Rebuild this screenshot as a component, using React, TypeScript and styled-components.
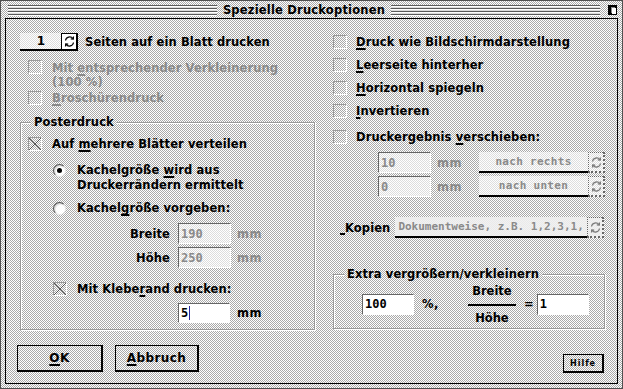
import React from "react";
import styled, { createGlobalStyle } from "styled-components";

const dither = "repeating-conic-gradient(#ffffff 0 25%, #a9a9a9 0 50%) 0 0 / 2px 2px fixed";
const lightDither = "repeating-conic-gradient(#ffffff 0 25%, #dcdcdc 0 50%) 0 0 / 2px 2px fixed";
const grey = "#8a8a8a";

const Global = createGlobalStyle`
    html, body {
        margin: 0;
        padding: 0;
        width: 623px;
        height: 389px;
        overflow: hidden;
    }
    body {
        font-family: "DejaVu Sans", "Liberation Sans", sans-serif;
        font-weight: bold;
        font-size: 11.5px;
        color: #000;
    }
`;

const Window = styled.div`
    width: 623px;
    height: 389px;
    box-sizing: border-box;
    border: 1px solid #505050;
    background: ${dither};
    display: flex;
    flex-direction: column;
`;

const TitleBar = styled.div`
    height: 17px;
    display: flex;
    align-items: center;
    padding: 0 5px 0 7px;
    gap: 4px;
`;

const Stripes = styled.div`
    flex: 1;
    height: 11px;
    margin-top: 1px;
    background: repeating-linear-gradient(
        to bottom,
        #5a5a5a 0 1px,
        #ffffff 1px 2px,
        #dcdcdc 2px 3px
    );
`;

const Title = styled.div`
    font-size: 11.5px;
    letter-spacing: 0.2px;
    padding: 0 2px;
`;

const CloseBox = styled.div`
    width: 9px;
    height: 10px;
    margin-left: 4px;
    background: #000;
    position: relative;
    &::after {
        content: "";
        position: absolute;
        right: 1px;
        bottom: 1px;
        width: 4px;
        height: 6px;
        background: #fff;
        box-shadow: -1px -1px 0 #888;
    }
`;

const Frame = styled.div`
    flex: 1;
    margin: 0 4px 4px 4px;
    border: 1px solid #000;
    padding: 14px 0 0 14px;
    display: flex;
    gap: 18px;
`;

const Column = styled.div<{ $w: number }>`
    width: ${p => p.$w}px;
    display: flex;
    flex-direction: column;
`;

const Row = styled.div<{ $h?: number; $mt?: number; $pl?: number; $top?: boolean }>`
    display: flex;
    align-items: ${p => (p.$top ? "flex-start" : "center")};
    height: ${p => (p.$h ? `${p.$h}px` : "auto")};
    margin-top: ${p => p.$mt ?? 0}px;
    padding-left: ${p => p.$pl ?? 0}px;
    flex-shrink: 0;
`;

const Label = styled.span<{ $off?: boolean; $ml?: number; $lh?: number; $pt?: number }>`
    color: ${p => (p.$off ? grey : "#000")};
    margin-left: ${p => p.$ml ?? 0}px;
    padding-top: ${p => p.$pt ?? 0}px;
    line-height: ${p => p.$lh ?? 14}px;
    white-space: nowrap;
    letter-spacing: 0.1px;
`;

const RightLabel = styled(Label)`
    width: 149px;
    text-align: right;
`;

const Mn = styled.span`
    text-decoration: underline;
    text-decoration-thickness: 2px;
    text-underline-offset: 2px;
`;

const MnGap = styled.span`
    display: inline-block;
    width: 5px;
    height: 12px;
    border-bottom: 2px solid #000;
    vertical-align: -3px;
`;

const CheckBox = styled.span<{ $on?: boolean }>`
    width: 14px;
    height: 14px;
    box-sizing: border-box;
    border-top: 1px solid #9a9a9a;
    border-left: 1px solid #9a9a9a;
    border-right: 1px solid #fff;
    border-bottom: 1px solid #fff;
    flex-shrink: 0;
    display: inline-flex;
    background: ${p =>
        p.$on
            ? `linear-gradient(45deg, transparent 46%, #555 46% 54%, transparent 54%),
               linear-gradient(-45deg, transparent 46%, #555 46% 54%, transparent 54%)`
            : "transparent"};
`;

const Radio = styled.span<{ $on?: boolean }>`
    width: 13px;
    height: 13px;
    box-sizing: border-box;
    border-radius: 50%;
    border: 1px solid #000;
    border-color: #555 #eee #eee #555;
    background: radial-gradient(circle at 60% 60%, #fff 0 45%, #cfcfcf 70%);
    flex-shrink: 0;
    display: inline-flex;
    align-items: center;
    justify-content: center;
    &::after {
        content: "";
        width: 5px;
        height: 5px;
        border-radius: 50%;
        background: ${p => (p.$on ? "#000" : "transparent")};
    }
`;

const Field = styled.div<{ $off?: boolean; $w?: number; $h?: number; $ml?: number }>`
    width: ${p => p.$w ?? 53}px;
    height: ${p => p.$h ?? 21}px;
    margin-left: ${p => p.$ml ?? 0}px;
    box-sizing: border-box;
    border-top: 1px solid #666;
    border-left: 1px solid #666;
    border-right: 1px solid #fff;
    border-bottom: 1px solid #fff;
    background: ${p => (p.$off ? lightDither : "#fff")};
    color: ${p => (p.$off ? grey : "#000")};
    display: flex;
    align-items: center;
    padding-left: 2px;
    flex-shrink: 0;
    font-family: "DejaVu Sans Mono", "Liberation Mono", monospace;
    font-size: 12px;
`;

const Caret = styled.span`
    width: 1px;
    height: 14px;
    background: #2a2aa0;
    margin-left: 1px;
`;

const Unit = styled.span<{ $off?: boolean; $ml?: number }>`
    margin-left: ${p => p.$ml ?? 6}px;
    color: ${p => (p.$off ? grey : "#000")};
    letter-spacing: 0.5px;
`;

const SpinBox = styled.div`
    width: 41px;
    height: 18px;
    box-sizing: border-box;
    background: ${lightDither};
    border-bottom: 2px solid #000;
    display: flex;
    align-items: center;
    justify-content: flex-end;
    padding-right: 16px;
    font-size: 12px;
`;

const Popup = styled.div<{ $w: number; $ml?: number }>`
    width: ${p => p.$w}px;
    height: 21px;
    margin-left: ${p => p.$ml ?? 0}px;
    box-sizing: border-box;
    background: ${lightDither};
    border-bottom: 2px solid #000;
    color: ${grey};
    display: flex;
    align-items: center;
    justify-content: center;
    overflow: hidden;
    white-space: nowrap;
    font-family: "DejaVu Sans Mono", "Liberation Mono", monospace;
    font-size: 11px;
    letter-spacing: 0.3px;
`;

const PopupLeft = styled(Popup)`
    justify-content: flex-start;
    padding-left: 3px;
    letter-spacing: 0;
`;

const CycleBox = styled.div<{ $off?: boolean; $h?: number }>`
    width: 17px;
    height: ${p => p.$h ?? 21}px;
    box-sizing: border-box;
    border: 1px ${p => (p.$off ? "dotted #666" : "solid #000")};
    border-right-width: 2px;
    border-bottom-width: 2px;
    background: ${p => (p.$off ? lightDither : "#fff")};
    display: flex;
    align-items: center;
    justify-content: center;
    flex-shrink: 0;
`;

const Group = styled.div<{ $h: number; $mt: number }>`
    position: relative;
    height: ${p => p.$h}px;
    margin-top: ${p => p.$mt}px;
    box-sizing: border-box;
    border: 1px solid #9a9a9a;
    box-shadow: inset 1px 1px 0 #fff, 1px 1px 0 #fff;
    display: flex;
    flex-direction: column;
    flex-shrink: 0;
`;

const Legend = styled.span`
    position: absolute;
    top: -8px;
    left: 10px;
    padding: 0 3px;
    line-height: 14px;
    background: ${dither};
    letter-spacing: 0.1px;
`;

const Fraction = styled.div`
    display: flex;
    flex-direction: column;
    align-items: center;
    width: 48px;
    margin-left: 29px;
    line-height: 14px;
`;

const FracLine = styled.div`
    width: 48px;
    height: 2px;
    background: #000;
    margin: 6px 0 5px;
`;

const Button = styled.button<{ $w: number }>`
    width: ${p => p.$w}px;
    height: 27px;
    box-sizing: border-box;
    border: 1px solid #000;
    border-right-width: 2px;
    border-bottom-width: 2px;
    background: ${dither};
    font: inherit;
    font-size: 12px;
    letter-spacing: 0.4px;
    color: #000;
    padding: 0;
`;

const SmallButton = styled(Button)`
    height: 19px;
    font-size: 8px;
    letter-spacing: 1px;
    align-self: flex-end;
    margin: 25px 1px 0 0;
`;

const ButtonRow = styled.div`
    display: flex;
    gap: 12px;
    margin: 15px 0 0 -3px;
`;

const Cycle = ({ off }: { off?: boolean }) => (
    <svg width="13" height="13" viewBox="0 0 13 13" fill="none" stroke={off ? "#777" : "#000"} strokeWidth="1.2">
        <path d="M2.5 5.5 A4.2 4.2 0 0 1 10 3.6" />
        <path d="M10.5 1.5 L10.3 4 L7.8 3.8" />
        <path d="M10.5 7.5 A4.2 4.2 0 0 1 3 9.4" />
        <path d="M2.5 11.5 L2.7 9 L5.2 9.2" />
    </svg>
);

const App: React.FC = () => {
    return (
        <>
            <Global />
            <Window>
                <TitleBar>
                    <Stripes />
                    <Title>Spezielle Druckoptionen</Title>
                    <Stripes />
                    <CloseBox />
                </TitleBar>
                <Frame>
                    <Column $w={295}>
                        <Row $h={18}>
                            <SpinBox>1</SpinBox>
                            <CycleBox $h={18}>
                                <Cycle />
                            </CycleBox>
                            <Label $ml={7}>Seiten auf ein Blatt drucken</Label>
                        </Row>
                        <Row $h={30} $mt={9} $pl={8} $top>
                            <CheckBox />
                            <Label $off $ml={10} $pt={1}>
                                Mit <Mn>e</Mn>ntsprechender Verkleinerung
                                <br />
                                (100 %)
                            </Label>
                        </Row>
                        <Row $h={14} $mt={1} $pl={8}>
                            <CheckBox />
                            <Label $off $ml={10}>
                                <Mn>B</Mn>roschürendruck
                            </Label>
                        </Row>
                        <Group $h={208} $mt={17}>
                            <Legend>Posterdruck</Legend>
                            <Row $h={14} $mt={14} $pl={7}>
                                <CheckBox $on />
                                <Label $ml={10}>
                                    Auf <Mn>m</Mn>ehrere Blätter verteilen
                                </Label>
                            </Row>
                            <Row $h={30} $mt={12} $pl={32} $top>
                                <Radio $on style={{ marginTop: 1 }} />
                                <Label $ml={11} $lh={15}>
                                    Kachelgröße <Mn>w</Mn>ird aus
                                    <br />
                                    Druckerrändern ermittelt
                                </Label>
                            </Row>
                            <Row $h={14} $mt={8} $pl={32}>
                                <Radio />
                                <Label $ml={11}>
                                    Kachel<Mn>g</Mn>röße vorgeben:
                                </Label>
                            </Row>
                            <Row $h={21} $mt={8}>
                                <RightLabel>Breite</RightLabel>
                                <Field $off $ml={8}>190</Field>
                                <Unit $off>mm</Unit>
                            </Row>
                            <Row $h={21} $mt={3}>
                                <RightLabel>Höhe</RightLabel>
                                <Field $off $ml={8}>250</Field>
                                <Unit $off>mm</Unit>
                            </Row>
                            <Row $h={14} $mt={14} $pl={32}>
                                <CheckBox $on />
                                <Label $ml={10}>
                                    Mit Klebe<Mn>r</Mn>and drucken:
                                </Label>
                            </Row>
                            <Row $h={20} $mt={7} $pl={157}>
                                <Field $w={52} $h={20}>
                                    5<Caret />
                                </Field>
                                <Unit $ml={7}>mm</Unit>
                            </Row>
                        </Group>
                        <ButtonRow>
                            <Button $w={86}>
                                <Mn>O</Mn>K
                            </Button>
                            <Button $w={84}>
                                <Mn>A</Mn>bbruch
                            </Button>
                        </ButtonRow>
                    </Column>
                    <Column $w={272}>
                        <Row $h={14} $mt={2}>
                            <CheckBox />
                            <Label $ml={9}>
                                <Mn>D</Mn>ruck wie Bildschirmdarstellung
                            </Label>
                        </Row>
                        <Row $h={14} $mt={9}>
                            <CheckBox />
                            <Label $ml={9}>
                                <Mn>L</Mn>eerseite hinterher
                            </Label>
                        </Row>
                        <Row $h={14} $mt={9}>
                            <CheckBox />
                            <Label $ml={9}>
                                <Mn>H</Mn>orizontal spiegeln
                            </Label>
                        </Row>
                        <Row $h={14} $mt={9}>
                            <CheckBox />
                            <Label $ml={9}>
                                <Mn>I</Mn>nvertieren
                            </Label>
                        </Row>
                        <Row $h={14} $mt={12}>
                            <CheckBox />
                            <Label $ml={9}>
                                Druckergebnis <Mn>v</Mn>erschieben:
                            </Label>
                        </Row>
                        <Row $h={21} $mt={8} $pl={45}>
                            <Field $off>10</Field>
                            <Unit $off>mm</Unit>
                            <Popup $w={110} $ml={17}>
                                nach rechts
                            </Popup>
                            <CycleBox $off>
                                <Cycle off />
                            </CycleBox>
                        </Row>
                        <Row $h={21} $mt={3} $pl={45}>
                            <Field $off>0</Field>
                            <Unit $off>mm</Unit>
                            <Popup $w={110} $ml={17}>
                                nach unten
                            </Popup>
                            <CycleBox $off>
                                <Cycle off />
                            </CycleBox>
                        </Row>
                        <Row $h={21} $mt={20} $pl={7}>
                            <Label>
                                <MnGap />
                                Kopien
                            </Label>
                            <PopupLeft $w={192} $ml={5}>
                                Dokumentweise, z.B. 1,2,3,1,
                            </PopupLeft>
                            <CycleBox $off>
                                <Cycle off />
                            </CycleBox>
                        </Row>
                        <Group $h={55} $mt={36}>
                            <Legend>Extra vergrößern/verkleinern</Legend>
                            <Row $h={42} $mt={8} $pl={28}>
                                <Field $w={52}>100</Field>
                                <Unit $ml={8}>%,</Unit>
                                <Fraction>
                                    <span>Breite</span>
                                    <FracLine />
                                    <span>Höhe</span>
                                </Fraction>
                                <Label $ml={8}>=</Label>
                                <Field $w={52} $ml={3}>
                                    1
                                </Field>
                            </Row>
                        </Group>
                        <SmallButton $w={41}>Hilfe</SmallButton>
                    </Column>
                </Frame>
            </Window>
        </>
    );
};

export default App;
